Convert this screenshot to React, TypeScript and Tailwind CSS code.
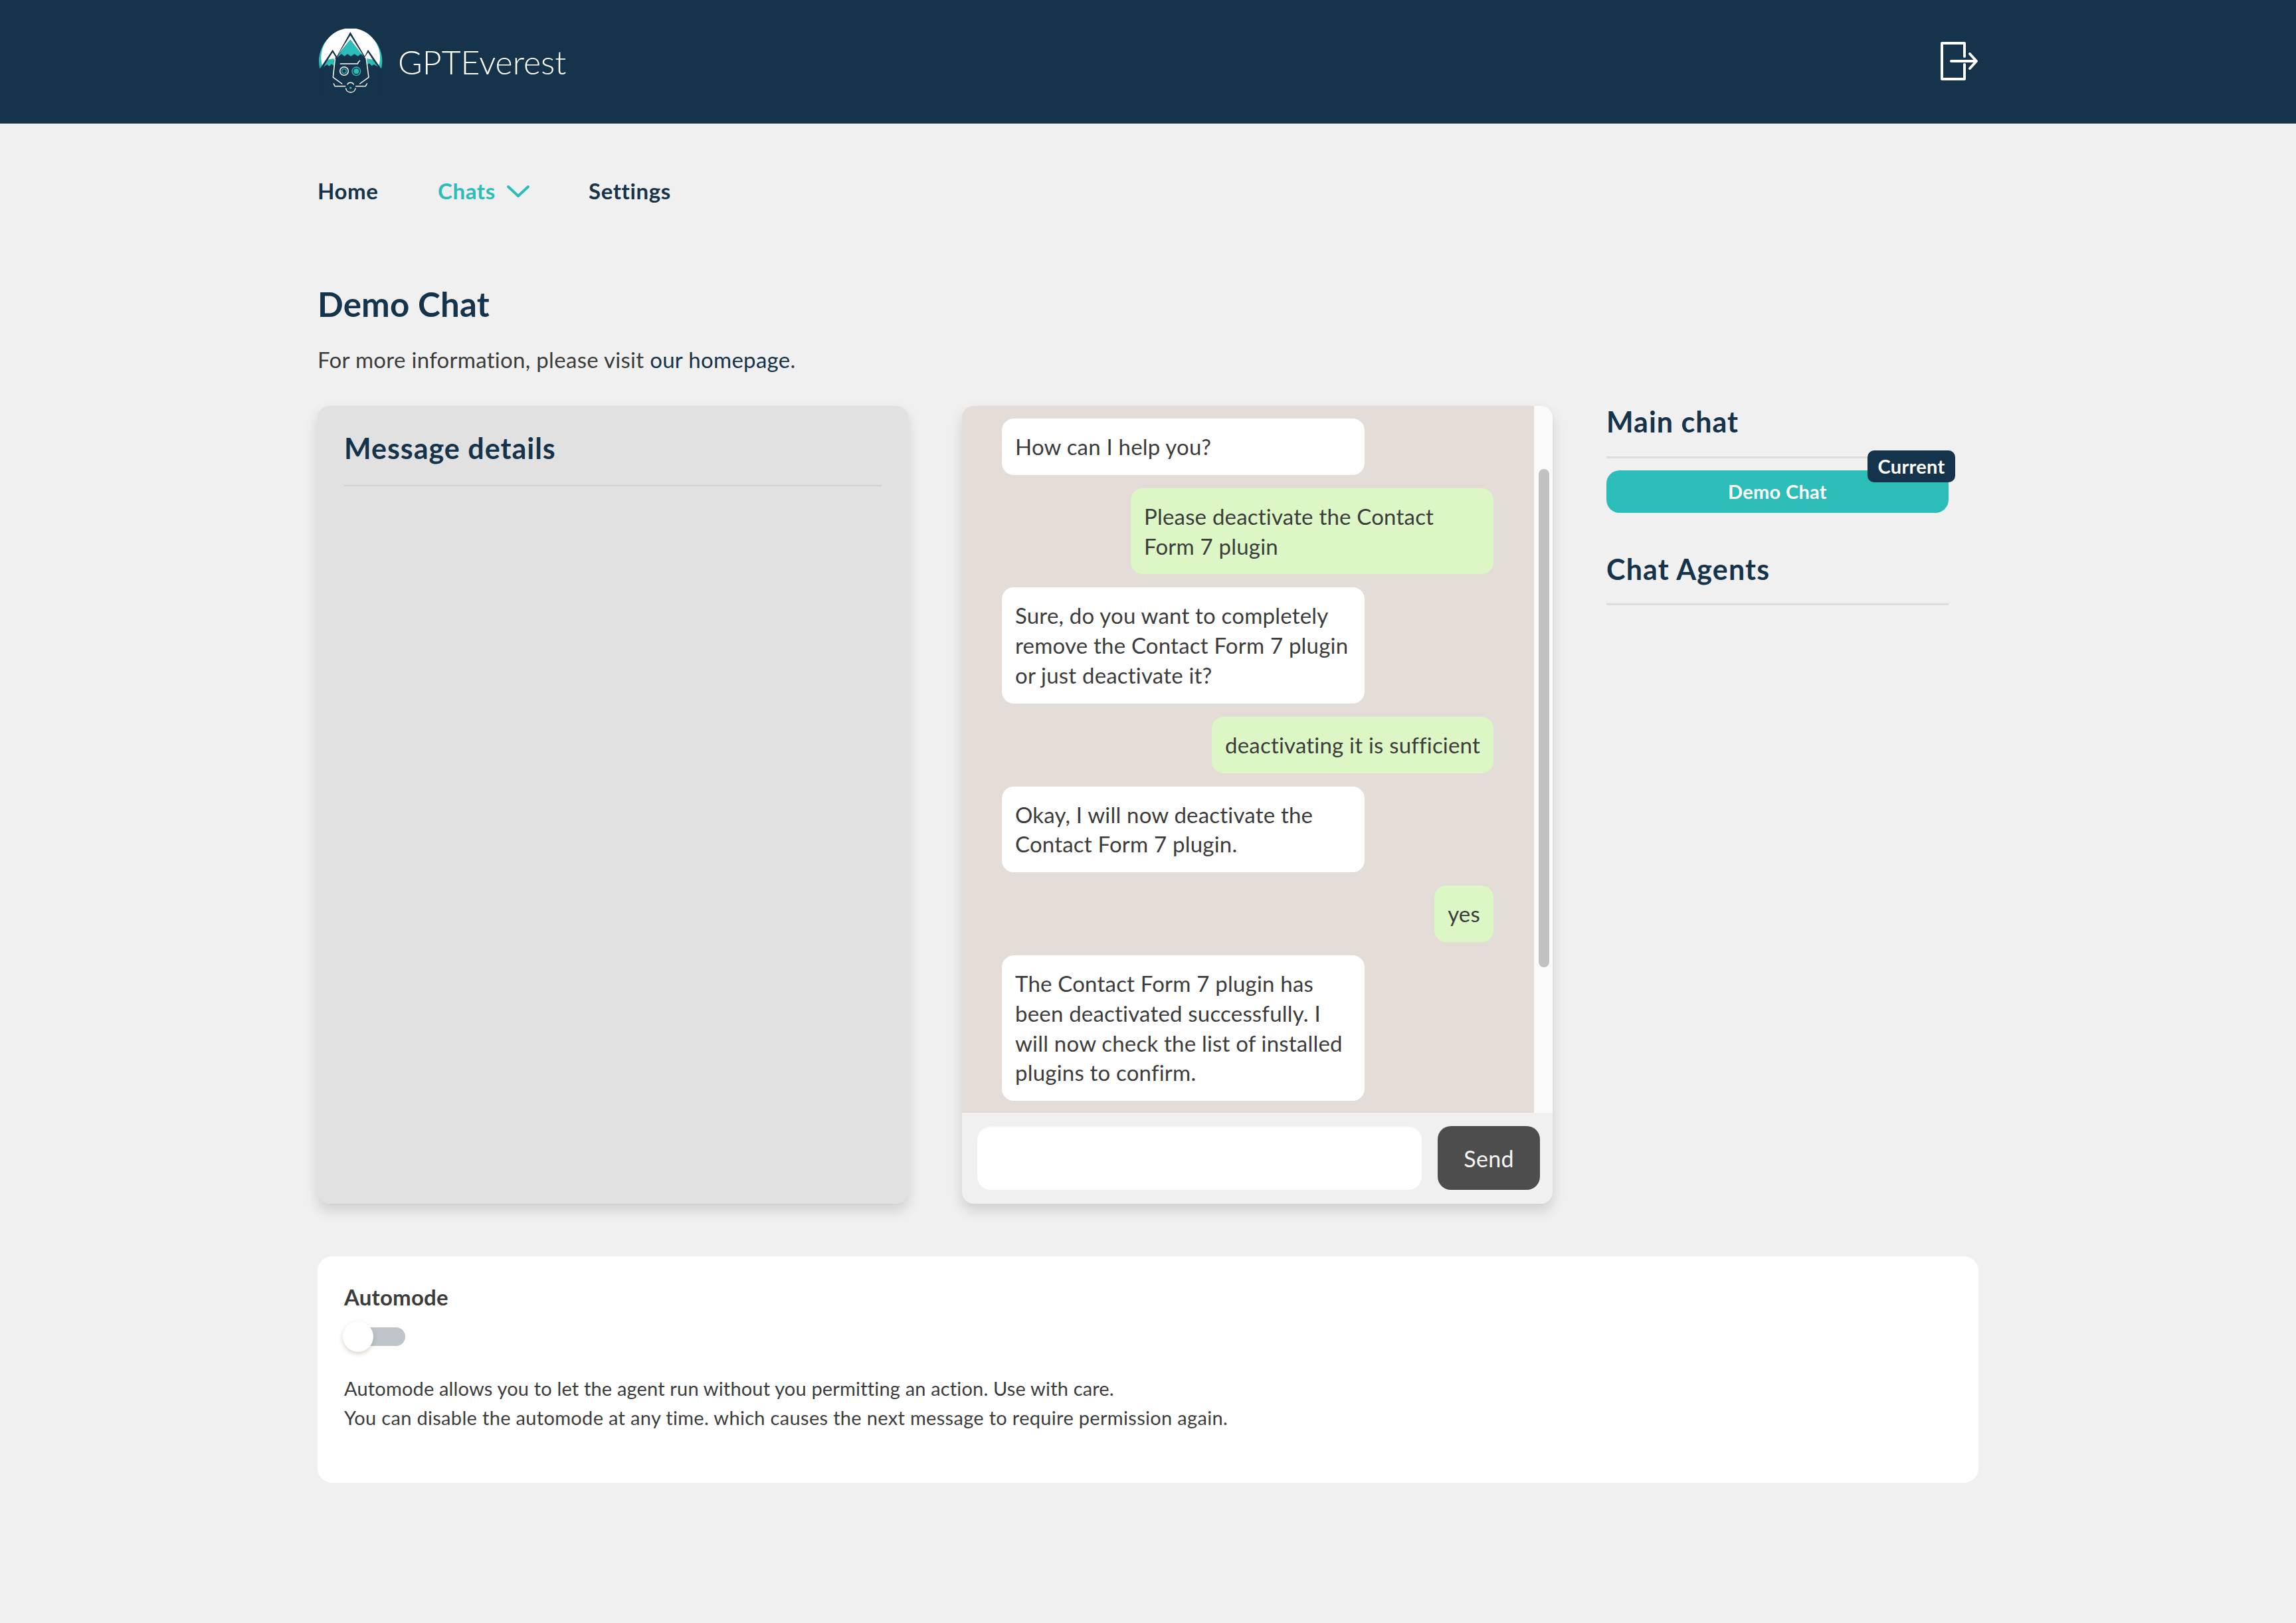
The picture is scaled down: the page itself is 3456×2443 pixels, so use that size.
import React from 'react'

const messages = [
  { from: 'bot', text: 'How can I help you?' },
  { from: 'user', text: 'Please deactivate the Contact Form 7 plugin' },
  { from: 'bot', text: 'Sure, do you want to completely remove the Contact Form 7 plugin or just deactivate it?' },
  { from: 'user', text: 'deactivating it is sufficient' },
  { from: 'bot', text: 'Okay, I will now deactivate the Contact Form 7 plugin.' },
  { from: 'user', text: 'yes' },
  { from: 'bot', text: 'The Contact Form 7 plugin has been deactivated successfully. I will now check the list of installed plugins to confirm.' },
]

const Logo = () => (
  <svg width="100" height="100" viewBox="25 35 300 300" fill="none">
    <path d="M35 215 A143 143 0 1 1 313 215 L174 215 Z" fill="#2cbdb9" />
    <path d="M47 205 A133 133 0 1 1 301 205 L174 230 Z" fill="#ffffff" />
    <path d="M36 216 L93 130 L112 160 L173 50 L238 160 L253 130 L312 216 L318 340 L33 340 Z" fill="#15334a" />
    <path d="M93 142 L107 165 L98 178 L72 175 Z" fill="#ffffff" />
    <path d="M72 175 L98 170 L102 205 L88 195 L78 205 L68 197 L52 208 Z" fill="#2cbdb9" />
    <path d="M253 142 L238 165 L248 178 L274 175 Z" fill="#ffffff" />
    <path d="M274 175 L248 170 L248 200 L258 192 L270 203 L280 197 L298 208 Z" fill="#2cbdb9" />
    <path d="M173 66 L230 155 L205 130 L173 85 L140 125 L116 155 Z" fill="#ffffff" />
    <path d="M173 85 L205 125 L235 163 L220 150 L207 160 L192 150 L175 160 L160 150 L147 160 L133 150 L112 166 L140 125 Z" fill="#2cbdb9" />
    <g stroke="#ffffff" strokeWidth="4.5" strokeLinecap="round" strokeLinejoin="round">
      <path d="M104 172 L95 255 L135 284" />
      <path d="M245 172 L256 255 L216 284" />
      <path d="M128 194 H206 Q209 184 216 180" />
      <path d="M98 284 L103 295 H150" />
      <path d="M248 284 L242 295 H198" />
      <path d="M153 306 A22 22 0 0 0 196 306" />
      <path d="M160 287 A16 16 0 0 1 188 287" />
      <circle cx="145" cy="227" r="19" />
    </g>
    <circle cx="145" cy="227" r="10" stroke="#2cbdb9" strokeWidth="4" />
    <circle cx="200" cy="228" r="19" stroke="#2cbdb9" strokeWidth="4" />
    <circle cx="200" cy="228" r="12" fill="#2cbdb9" />
    <circle cx="174" cy="303" r="5" fill="#2cbdb9" />
  </svg>
)

const LogoutIcon = () => (
  <svg width="57" height="64" viewBox="0 0 57 64" fill="none" stroke="#ffffff" strokeWidth="4" strokeLinecap="round" strokeLinejoin="round">
    <path d="M36 24 V4 H2 V58 H36 V36" />
    <path d="M16 31 H53" />
    <path d="M44 20 L54 31 L44 42" />
  </svg>
)

const Chevron = () => (
  <svg width="34" height="20" viewBox="0 0 34 20" fill="none" stroke="#2cbdb9" strokeWidth="4" strokeLinecap="round" strokeLinejoin="round">
    <path d="M2 3 L17 17 L32 3" />
  </svg>
)

export default function App() {
  return (
    <div className="min-h-[2443px] bg-[#f0f0f0] font-['Lato','Liberation_Sans',sans-serif] text-[#3c3c3c]">
      {/* Header */}
      <header className="h-[186px] bg-[#15334a]">
        <div className="mx-auto flex h-full w-[2500px] items-center justify-between">
          <div className="flex items-center gap-[21px]">
            <Logo />
            <span className="text-[50px] leading-none font-light text-white">GPTEverest</span>
          </div>
          <LogoutIcon />
        </div>
      </header>

      <main className="mx-auto w-[2500px]">
        {/* Nav */}
        <nav className="flex h-[204px] items-center text-[33px] font-bold tracking-[0.6px] text-[#15334a]">
          <span className="w-[181px]">Home</span>
          <span className="flex w-[227px] items-center gap-[17px] text-[#2cbdb9]">
            Chats <Chevron />
          </span>
          <span>Settings</span>
        </nav>

        <h1 className="mt-[38px] text-[51px] leading-[60px] font-bold tracking-[0.2px] text-[#15334a]">Demo Chat</h1>
        <p className="mt-[31px] text-[33px] leading-[44px] tracking-[0.3px]">
          For more information, please visit <span className="text-[#15334a]">our homepage</span>.
        </p>

        {/* Panels */}
        <div className="mt-[48px] flex h-[1201px]">
          <section className="h-full w-[889px] rounded-[18px] bg-[#e1e1e1] px-[40px] pt-[40px] shadow-[0_10px_20px_rgba(0,0,0,0.14)]">
            <h2 className="h-[81px] border-b-2 border-[#d0d0d0] text-[43px] leading-[48px] font-bold tracking-[1px] text-[#15334a]">Message details</h2>
          </section>

          <section className="ml-[81px] flex h-full w-[889px] flex-col overflow-hidden rounded-[18px] bg-[#f0f0f0] shadow-[0_10px_20px_rgba(0,0,0,0.14)]">
            <div className="flex h-[1064px]">
              <div className="flex flex-1 flex-col gap-[20px] overflow-hidden bg-[#e4dcd6] pt-[19px] pr-[61px] pl-[60px] text-[33px] leading-[44.8px] tracking-[0.2px]">
                {messages.map((m, i) => (
                  <div
                    key={i}
                    className={
                      m.from === 'user'
                        ? 'w-fit max-w-[546px] self-end rounded-[18px] bg-[#dcf7c5] p-[20px]'
                        : 'w-[546px] rounded-[18px] bg-white p-[20px]'
                    }
                  >
                    {m.text}
                  </div>
                ))}
              </div>
              <div className="w-[28px] bg-[#fafafa] pt-[95px] pl-[7px]">
                <div className="h-[750px] w-[16px] rounded-full bg-[#c1c1c1]" />
              </div>
            </div>
            <div className="flex gap-[24px] pt-[20px] pl-[23px]">
              <div className="h-[96px] w-[669px] rounded-[20px] bg-white shadow-[inset_0_2px_2px_rgba(0,0,0,0.04)]" />
              <button className="h-[96px] w-[154px] rounded-[20px] bg-[#4d4d4d] text-[34px] tracking-[0.3px] text-[#f5f5f5]">Send</button>
            </div>
          </section>

          <aside className="ml-[81px] w-[515px]">
            <h2 className="h-[79px] border-b-[3px] border-[#dddddd] text-[43px] leading-[48px] font-bold tracking-[1px] text-[#15334a]">Main chat</h2>
            <div className="relative mt-[18px] flex h-[64px] items-center justify-center rounded-[20px] bg-[#2cbdb9] text-[29px] font-bold tracking-[0.3px] text-white">
              Demo Chat
              <span className="absolute top-[-30px] right-[-10px] flex h-[48px] w-[132px] items-center justify-center rounded-[10px] bg-[#15334a] text-[29px] font-bold text-white">Current</span>
            </div>
            <h2 className="mt-[61px] h-[78px] border-b-[3px] border-[#dddddd] text-[43px] leading-[48px] font-bold tracking-[1.2px] text-[#15334a]">Chat Agents</h2>
          </aside>
        </div>

        {/* Automode */}
        <section className="mt-[79px] h-[341px] rounded-[22px] bg-white px-[40px] pt-[39px]">
          <h3 className="text-[33px] leading-[44px] font-bold tracking-[0.2px]">Automode</h3>
          <div className="relative mt-[15px] flex h-[46px] w-[92px] items-center">
            <div className="h-[28px] w-[92px] rounded-full bg-[#bdc5ca]" />
            <div className="absolute top-0 left-[-2px] h-[46px] w-[46px] rounded-full bg-white shadow-[0_3px_6px_rgba(120,80,40,0.25)]" />
          </div>
          <p className="mt-[33px] text-[29px] leading-[44px] tracking-[0.32px]">
            <span className="tracking-[0.17px]">Automode allows you to let the agent run without you permitting an action. Use with care.</span>
            <br />
            You can disable the automode at any time. which causes the next message to require permission again.
          </p>
        </section>
      </main>
    </div>
  )
}
